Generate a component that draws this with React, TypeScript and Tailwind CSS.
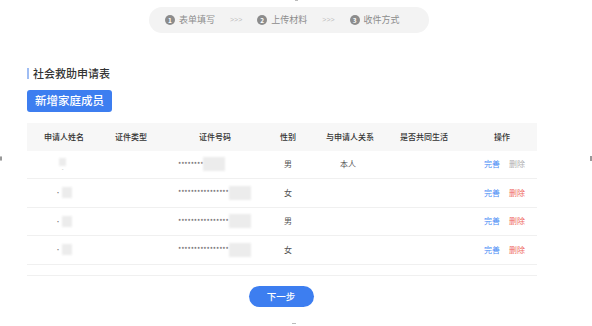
import React from 'react';

const font = { fontFamily: '"Noto Sans CJK SC", "Noto Sans", sans-serif' };

const cols = 'grid grid-cols-[74px_60px_108px_38px_86px_62px_82px]';

const steps = ['表单填写', '上传材料', '收件方式'];

type Row = { first?: boolean; stars: string; gender: string; relation: string };

const rows: Row[] = [
  { first: true, stars: '********', gender: '男', relation: '本人' },
  { stars: '****************', gender: '女', relation: '' },
  { stars: '****************', gender: '男', relation: '' },
  { stars: '****************', gender: '女', relation: '' },
];

const Blur = ({ w, h }: { w: string; h: string }) => (
  <span className={`inline-block ${w} ${h} bg-[#ececec] blur-[1px]`} />
);

const App = () => {
  return (
    <div className="relative w-[592px] h-[326px] bg-white overflow-hidden text-[#333]" style={font}>
      {/* edge marks */}
      <span className="absolute left-0 top-[156px] w-[2px] h-[5px] border border-[#999] rounded-sm" />
      <span className="absolute right-0 top-[156px] w-[2px] h-[5px] bg-[#999]" />
      <span className="absolute left-[295px] top-0 w-[3px] h-[1px] bg-[#bbb]" />
      <span className="absolute left-[292px] bottom-[2px] w-[4px] h-[1px] bg-[#bbb]" />

      {/* stepper */}
      <div className="flex justify-center pt-[7px]">
        <div className="ml-[-14px] flex items-center h-[26px] w-[280px] rounded-full bg-[#f3f3f3] px-[16px] text-[9px] text-[#8c8c8c]">
          {steps.map((s, i) => (
            <React.Fragment key={s}>
              {i > 0 && (
                <span className="mx-[15px] text-[7px] text-[#bdbdbd]" style={{ fontFamily: '"Liberation Sans", sans-serif' }}>
                  &gt;&gt;&gt;
                </span>
              )}
              <span className="flex items-center gap-[4px]">
                <span className="flex items-center justify-center w-[10px] h-[10px] rounded-full bg-[#8c8c8c] text-white text-[6.5px] font-bold leading-none">
                  {i + 1}
                </span>
                {s}
              </span>
            </React.Fragment>
          ))}
        </div>
      </div>

      <div className="pl-[27px] pt-[32px]">
        {/* title */}
        <div className="flex items-center gap-[4px]">
          <span className="w-[2px] h-[11px] bg-[#9fbdf3]" />
          <span className="text-[11px] font-medium text-[#333]">社会救助申请表</span>
        </div>

        {/* add button */}
        <button className="mt-[8px] w-[85px] h-[22px] rounded-[3px] bg-[#3d7ef0] text-white text-[11.5px] font-medium">
          新增家庭成员
        </button>

        {/* table */}
        <div className="mt-[11px] w-[510px] text-[8px]">
          <div className={`${cols} h-[28px] items-center bg-[#f7f7f7] text-center font-medium text-[#333]`}>
            <span>申请人姓名</span>
            <span>证件类型</span>
            <span>证件号码</span>
            <span>性别</span>
            <span>与申请人关系</span>
            <span>是否共同生活</span>
            <span className="pl-[12px]">操作</span>
          </div>
          {rows.map((r, i) => (
            <div key={i} className={`${cols} h-[28.5px] items-center text-center border-b border-[#f0f0f0] text-[#555]`}>
              <span className="flex items-center justify-start pl-[28px] gap-[1px]">
                {r.first ? (
                  <span className="flex flex-col items-center pl-[4px]">
                    <Blur w="w-[7px]" h="h-[8px]" />
                    <span className="text-[5px] leading-none text-[#999]">-</span>
                  </span>
                ) : (
                  <>
                    <span className="text-[6px] text-[#777]">•</span>
                    <Blur w="w-[10px]" h="h-[11px]" />
                  </>
                )}
              </span>
              <span />
              <span className="flex items-center justify-start pl-[17px]">
                <span className="text-[7px] tracking-[-0.1px] text-[#555] leading-none">{r.stars}</span>
                <Blur w="w-[22px]" h="h-[14px]" />
              </span>
              <span>{r.gender}</span>
              <span className="pr-[4px]">{r.relation}</span>
              <span />
              <span className="flex items-center justify-start pl-[29px] gap-[9px]">
                <span className="text-[#4a8cf5]">完善</span>
                <span className={r.first ? 'text-[#b0b0b0]' : 'text-[#ef6b62]'}>删除</span>
              </span>
            </div>
          ))}
          <div className="h-[11px] border-b border-[#f0f0f0]" />
        </div>

        {/* next button */}
        <div className="flex w-[510px] justify-center mt-[10px]">
          <button className="ml-[-2px] w-[65px] h-[21px] rounded-full bg-[#3d7ef0] text-white text-[9.5px] font-medium">
            下一步
          </button>
        </div>
      </div>
    </div>
  );
};

export default App;
